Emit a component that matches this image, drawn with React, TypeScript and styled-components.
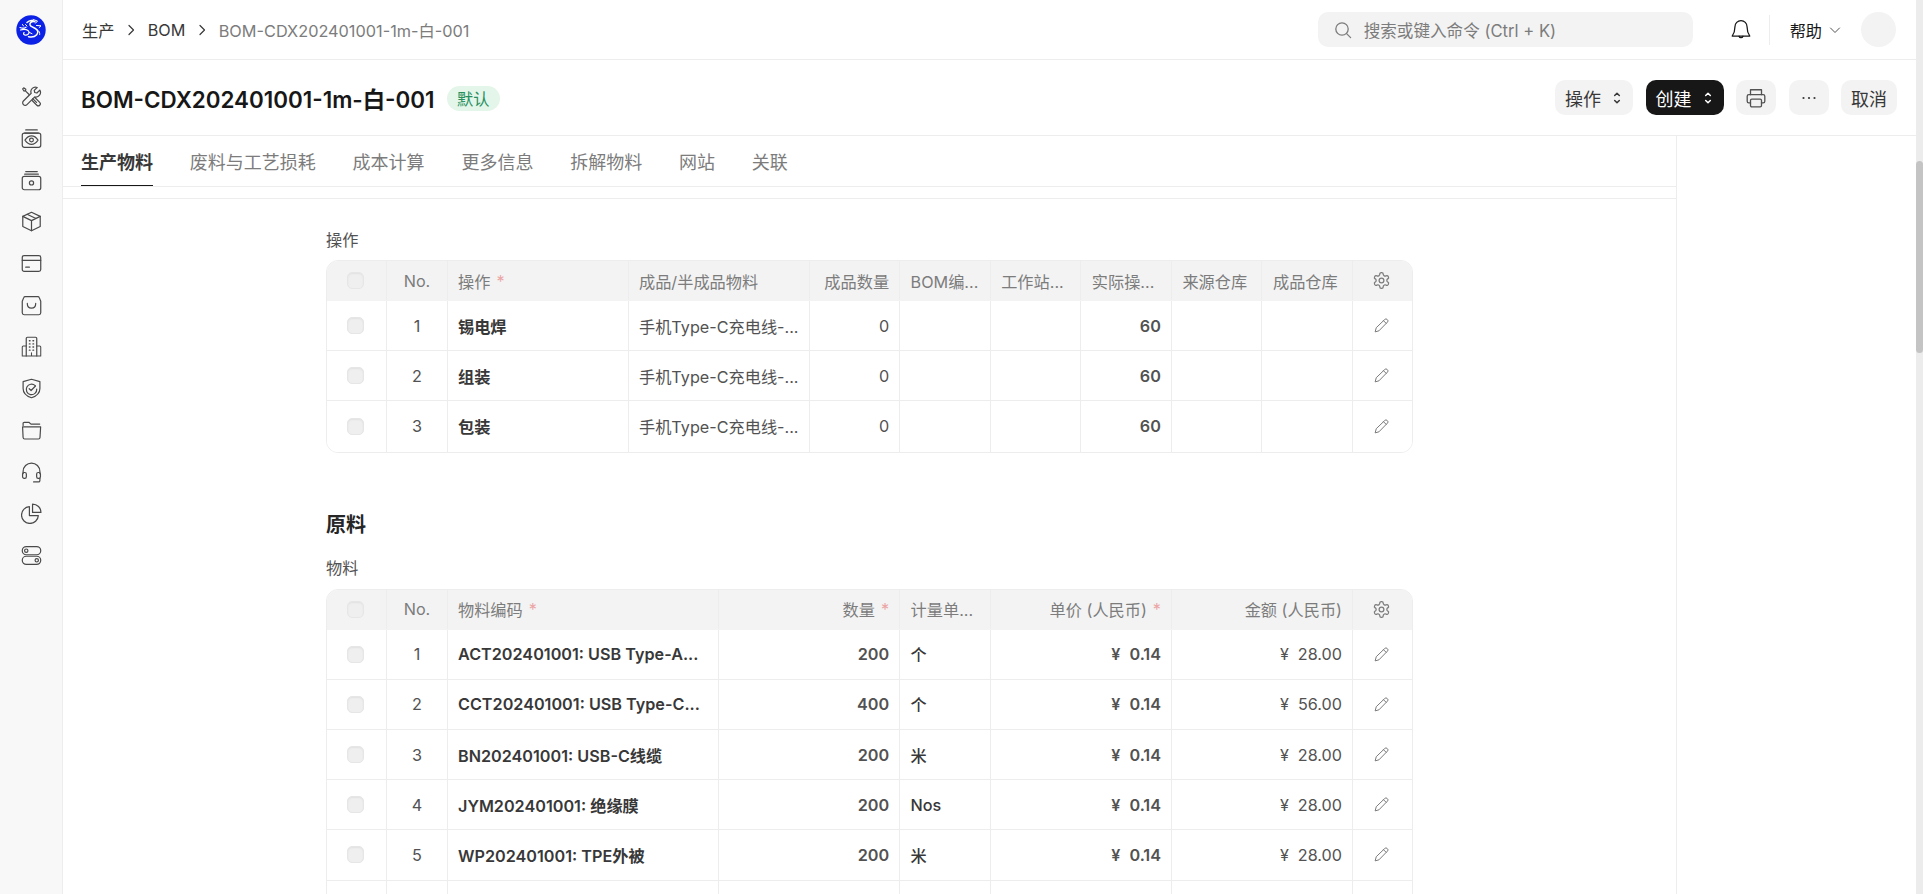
import React from "react";
import styled, { createGlobalStyle } from "styled-components";

const GlobalStyle = createGlobalStyle`
  html, body, #root {
    margin: 0;
    padding: 0;
    height: 100%;
    overflow: hidden;
    background: #fff;
  }
  body {
    font-family: Inter, "Noto Sans CJK SC", sans-serif;
    font-size: 16.2px;
    color: #171717;
  }
`;

const Page = styled.div`
  display: flex;
  height: 100vh;
  overflow: hidden;
`;

/* sidebar */
const Sidebar = styled.aside`
  flex: 0 0 63px;
  box-sizing: border-box;
  background: #f8f8f8;
  border-right: 1px solid #ededed;
`;

const LogoBox = styled.div`
  height: 60px;
  display: flex;
  align-items: center;
  justify-content: center;
`;

const NavList = styled.nav`
  margin-top: 16px;
`;

const NavItem = styled.div`
  height: 41.7px;
  display: flex;
  align-items: center;
  justify-content: center;
`;

const NavSvg = styled.svg.attrs({
  viewBox: "0 0 20 20",
  width: 21,
  height: 21,
  fill: "none",
  stroke: "#4a4a4a",
  strokeWidth: 1.15,
  strokeLinecap: "round",
  strokeLinejoin: "round",
})``;

/* main column */
const Main = styled.main`
  flex: 1;
  min-width: 0;
  display: flex;
  flex-direction: column;
`;

const TopBar = styled.header`
  flex: 0 0 60px;
  box-sizing: border-box;
  display: flex;
  align-items: center;
  padding: 0 20px 0 19px;
  border-bottom: 1px solid #ededed;
`;

const Crumbs = styled.div`
  display: flex;
  align-items: center;
  gap: 10.7px;
  color: #383838;
`;

const CrumbLast = styled.span`
  font-size: 16.3px;
  color: #7c7c7c;
`;

const Search = styled.div`
  margin-left: auto;
  width: 375px;
  height: 35px;
  box-sizing: border-box;
  display: flex;
  align-items: center;
  gap: 12px;
  padding-left: 16px;
  font-size: 16.6px;
  background: #f3f3f3;
  border-radius: 10px;
  color: #7c7c7c;
`;

const BellWrap = styled.div`
  margin-left: 37px;
  display: flex;
`;

const TopDivider = styled.div`
  width: 1px;
  height: 30px;
  margin: 0 20px 0 17px;
  background: #ededed;
`;

const Help = styled.div`
  display: flex;
  align-items: center;
  gap: 6.5px;
  color: #171717;
`;

const Avatar = styled.div`
  width: 35px;
  height: 35px;
  margin-left: 20.5px;
  border-radius: 50%;
  background: #f3f3f3;
`;

const PageHead = styled.div`
  flex: 0 0 76px;
  box-sizing: border-box;
  display: flex;
  align-items: center;
  padding: 0 19px 0 18px;
  border-bottom: 1px solid #ededed;
`;

const Title = styled.h1`
  margin: 0;
  font-size: 22.4px;
  font-weight: 600;
  color: #171717;
`;

const Badge = styled.span`
  margin: 1px 0 0 12px;
  height: 25px;
  padding: 0 10.5px;
  display: flex;
  align-items: center;
  border-radius: 13px;
  background: #e4f5e9;
  color: #278f5e;
`;

const Actions = styled.div`
  margin-left: auto;
  display: flex;
  gap: 12.5px;
`;

const Button = styled.button<{ $dark?: boolean; $square?: boolean }>`
  height: 35px;
  box-sizing: border-box;
  display: flex;
  align-items: center;
  justify-content: center;
  gap: 10px;
  padding: ${(p) => (p.$square ? "0" : "0 10px")};
  width: ${(p) => (p.$square ? "40px" : "auto")};
  border: 0;
  border-radius: 10px;
  font: inherit;
  font-size: 18px;
  background: ${(p) => (p.$dark ? "#171717" : "#f3f3f3")};
  color: ${(p) => (p.$dark ? "#fff" : "#383838")};
`;

const Content = styled.div`
  flex: 1;
  min-height: 0;
  display: flex;
  overflow: hidden;
`;

const FormColumn = styled.div`
  flex: 0 0 1614px;
  box-sizing: border-box;
  border-right: 1px solid #ededed;
`;

const Tabs = styled.div`
  height: 51px;
  box-sizing: border-box;
  display: flex;
  gap: 36.8px;
  padding-left: 18px;
  border-bottom: 1px solid #ededed;
`;

const Tab = styled.div<{ $active?: boolean }>`
  height: 50px;
  box-sizing: border-box;
  display: flex;
  align-items: center;
  font-size: 18px;
  font-weight: ${(p) => (p.$active ? 600 : 400)};
  color: ${(p) => (p.$active ? "#383838" : "#7c7c7c")};
  border-bottom: ${(p) => (p.$active ? "1.5px solid #171717" : "0")};
`;

const TabGap = styled.div`
  height: 11px;
  border-bottom: 1px solid #ededed;
`;

const Section = styled.section`
  width: 1087px;
  margin-left: 263px;
  padding-top: 30px;
`;

const FieldLabel = styled.div`
  line-height: 22px;
  margin-bottom: 9px;
  color: #525252;
`;

const SectionTitle = styled.h2`
  margin: 58px 0 18px;
  font-size: 20px;
  line-height: 28px;
  font-weight: 600;
  color: #262626;
  & + ${FieldLabel} {
    margin-bottom: 10px;
  }
`;

/* grid tables */
const Table = styled.div`
  box-sizing: border-box;
  border: 1px solid #ededed;
  border-radius: 12px;
  overflow: hidden;
`;

const Row = styled.div<{ $cols: string; $head?: boolean }>`
  box-sizing: border-box;
  display: grid;
  grid-template-columns: ${(p) => p.$cols};
  height: ${(p) => (p.$head ? "40px" : "50.2px")};
  background: ${(p) => (p.$head ? "#f3f3f3" : "#fff")};
  color: ${(p) => (p.$head ? "#7c7c7c" : "#525252")};
  border-bottom: 1px solid ${(p) => (p.$head ? "transparent" : "#ededed")};
  &:last-child {
    border-bottom: 0;
  }
`;

const Cell = styled.div<{ $align?: string; $weight?: number; $dark?: boolean }>`
  box-sizing: border-box;
  min-width: 0;
  display: flex;
  align-items: center;
  justify-content: ${(p) => p.$align || "flex-start"};
  padding: 0 10px 0 10.5px;
  white-space: nowrap;
  overflow: hidden;
  border-right: 1px solid #ededed;
  font-weight: ${(p) => p.$weight || 400};
  color: ${(p) => (p.$dark ? "#383838" : "inherit")};
  &:first-child,
  &:last-child {
    padding: 0 11px 0 9px;
  }
  &:last-child {
    border-right: 0;
  }
`;

const Check = styled.span`
  width: 17px;
  height: 17px;
  box-sizing: border-box;
  border-radius: 5px;
  background: #efefef;
  border: 1px solid #e6e6e6;
  box-shadow: inset 0 1px 2px rgba(0, 0, 0, 0.06);
`;

const Required = styled.span`
  margin-left: 6px;
  color: #eba5a5;
`;

const Yen = styled.span`
  margin-right: 9px;
`;

const Scrollbar = styled.div`
  flex: 0 0 7px;
  background: #ececec;
`;

const ScrollThumb = styled.div`
  height: 192px;
  margin-top: 161px;
  border-radius: 4px;
  background: #c4c4c4;
`;

/* icons */
const Logo = () => (
  <svg width="30" height="30" viewBox="0 0 30 30">
    <circle cx="15" cy="15" r="14.7" fill="#0b22e6" />
    <g fill="none" stroke="#fff" strokeLinecap="round" strokeLinejoin="round">
      <path strokeWidth="1.500" d="M11 7.500c2.500-2.500 6-2.600 8-.7-1.800-.4-3.500 0-4.500 1-1.200 1.300-.4 3 1.300 3.900l3.500 1.800c2.700 1.400 3.200 4.200 1.400 6.200-1.700 1.900-4.800 2.700-8.200 2" />
      <path strokeWidth="1.200" d="M4 12.500c2.300 1 4.500.7 6-.3M4.500 15c2.500-.8 5.500-.8 7.500.6 1.500 1.100 1.300 3-.2 4-1 .7-2.400.7-3.500.1-.9-.5-1-1.600-.2-2.100" />
      <path strokeWidth="1" d="M17 4.500l4.500 1.500-2 2.200M20.500 10.500l4.500.3-1.800 1.700M21.500 15c1.700 1 2.400 2.700 2.200 4.500M9.500 9.500l1.500 1.500M6.500 9.500l1 1.500M13.500 17.500l2.500 1.200" />
    </g>
  </svg>
);

const ToolsIcon = () => (
  <NavSvg>
    <path d="M17.900 3.900l-2.800 2.800-2-.5-.5-2 2.800-2.800a4.300 4.300 0 0 0-5.700 5.500L2.300 14.300a2.400 2.400 0 0 0 3.400 3.400l7.400-7.400a4.300 4.300 0 0 0 4.800-6.400z" />
    <path d="M7.700 8.100L4.200 4.600l.4-1.600-2-1.200-1 1 1.200 2 1.600-.4M11.200 12l3.600 3.600M13.200 11l4.600 4.600a1.900 1.900 0 0 1-2.700 2.700l-4.500-4.500" />
  </NavSvg>
);

const EyeBoxIcon = () => (
  <NavSvg>
    <path d="M4.500 1.800h11M3.500 4.800h13" />
    <rect x="1.200" y="4.800" width="17.600" height="13.600" rx="2" />
    <path d="M3.800 11.500c2-3 4-4 6.200-4s4.200 1 6.200 4c-2 3-4 4-6.200 4s-4.200-1-6.200-4z" />
    <circle cx="10" cy="11.500" r="1.800" />
  </NavSvg>
);

const BoxDotIcon = () => (
  <NavSvg>
    <path d="M4.500 1.500h11M3.500 4h13" />
    <rect x="1.200" y="6" width="17.600" height="12.800" rx="2" />
    <circle cx="10" cy="12.300" r="2" />
  </NavSvg>
);

const PackageIcon = () => (
  <NavSvg>
    <path d="M10 1.200l8.300 3.900v9.700L10 18.800l-8.300-4V5.100z" />
    <path d="M1.700 5.100L10 9.200l8.300-4.100M10 9.200v9.600M5.800 3.100l8.400 4.100" />
  </NavSvg>
);

const CardIcon = () => (
  <NavSvg>
    <rect x="1.200" y="2.500" width="17.600" height="15" rx="1.800" />
    <path d="M1.200 7h17.600M4.500 13.500h3.500" />
  </NavSvg>
);

const BagIcon = () => (
  <NavSvg>
    <path d="M4 1.500h12a1.500 1.500 0 0 1 1.400 1l1.400 3.500v11a1.800 1.800 0 0 1-1.800 1.800H3a1.800 1.800 0 0 1-1.800-1.800V6l1.400-3.500a1.500 1.500 0 0 1 1.400-1z" />
    <path d="M6 8c0 3 1.500 4.500 4 4.500S14 11 14 8" />
  </NavSvg>
);

const BuildingIcon = () => (
  <NavSvg>
    <path d="M5 19V2.500A1.200 1.200 0 0 1 6.200 1.200h7.600A1.200 1.200 0 0 1 15 2.500V19" />
    <path d="M5 9.500H2.200a1 1 0 0 0-1 1V19h17.600v-8.500a1 1 0 0 0-1-1H15M10 19v-3" strokeWidth="1" />
    <path d="M8 4.500h.6M11.400 4.500h.6M8 7.500h.6M11.400 7.500h.6M8 10.500h.6M11.400 10.500h.6M8 13.500h.6M11.400 13.500h.6" strokeWidth="1.300" />
  </NavSvg>
);

const ShieldIcon = () => (
  <NavSvg>
    <path d="M10 1.200l8 2.300v6.500c0 4.300-3.300 7.300-8 8.800-4.700-1.500-8-4.500-8-8.800V3.500z" />
    <path d="M13.500 7.300A5 5 0 1 0 15 10.500" />
    <path d="M7.800 10.200l1.800 1.700 4.200-4.300" />
  </NavSvg>
);

const FolderIcon = () => (
  <NavSvg>
    <path d="M2 5.200V3.200a1 1 0 0 1 1-1h4.500l2 1.700h8.300" />
    <path d="M1.500 6.500h17.200l-.6 10.200a1.500 1.500 0 0 1-1.500 1.400H3.500A1.500 1.500 0 0 1 2 16.700z" />
  </NavSvg>
);

const HeadsetIcon = () => (
  <NavSvg>
    <path d="M2 11V9a8 8 0 0 1 16 0v2" />
    <rect x="1.500" y="10" width="3.600" height="5.500" rx="1.500" />
    <rect x="14.900" y="10" width="3.600" height="5.500" rx="1.500" />
    <path d="M18 15.500v2a1.500 1.500 0 0 1-1.500 1.500H12" />
  </NavSvg>
);

const PieIcon = () => (
  <NavSvg>
    <path d="M8 3.500a8 8 0 1 0 8.500 8.500H8z" />
    <path d="M11 1a8 8 0 0 1 8 8h-8z" />
  </NavSvg>
);

const TogglesIcon = () => (
  <NavSvg>
    <rect x="1.200" y="1.500" width="17.600" height="7.800" rx="3.900" />
    <circle cx="5" cy="5.400" r="1.600" />
    <rect x="1.200" y="10.700" width="17.600" height="7.800" rx="3.900" />
    <circle cx="15" cy="14.600" r="1.600" />
  </NavSvg>
);

const navIcons = [
  ToolsIcon,
  EyeBoxIcon,
  BoxDotIcon,
  PackageIcon,
  CardIcon,
  BagIcon,
  BuildingIcon,
  ShieldIcon,
  FolderIcon,
  HeadsetIcon,
  PieIcon,
  TogglesIcon,
];

const ChevronRight = () => (
  <svg width="12" height="12" viewBox="0 0 12 12" fill="none" stroke="#383838" strokeWidth="1.200" strokeLinecap="round" strokeLinejoin="round">
    <path d="M4 1.500L8.500 6 4 10.500" />
  </svg>
);

const ChevronDown = () => (
  <svg width="12" height="12" viewBox="0 0 12 12" fill="none" stroke="#525252" strokeWidth="1" strokeLinecap="round" strokeLinejoin="round">
    <path d="M1.500 4l4.500 4.500L10.500 4" />
  </svg>
);

const SearchIcon = () => (
  <svg width="18" height="18" viewBox="0 0 18 18" fill="none" stroke="#7c7c7c" strokeWidth="1.300" strokeLinecap="round">
    <circle cx="8" cy="8" r="6.200" />
    <path d="M12.600 12.600l4 4" />
  </svg>
);

const BellIcon = () => (
  <svg width="22" height="22" viewBox="0 0 20 20" fill="none" stroke="#171717" strokeWidth="1.150" strokeLinecap="round" strokeLinejoin="round">
    <path d="M10 1.500a5.500 5.500 0 0 0-5.500 5.500c0 5-1.800 7.500-2.500 8.500h16c-.7-1-2.500-3.500-2.500-8.500A5.500 5.500 0 0 0 10 1.500z" />
    <path d="M8.200 15.700a1.900 1.900 0 0 0 3.600 0" />
  </svg>
);

const UpDownIcon = ({ color }: { color: string }) => (
  <svg width="12" height="14" viewBox="0 0 12 14" fill="none" stroke={color} strokeWidth="1.500" strokeLinecap="round" strokeLinejoin="round">
    <path d="M3.700 4.500L6 2.200l2.300 2.300M3.700 9.500L6 11.800l2.300-2.300" />
  </svg>
);

const PrinterIcon = () => (
  <svg width="22" height="22" viewBox="0 0 20 20" fill="none" stroke="#525252" strokeWidth="1.200" strokeLinecap="round" strokeLinejoin="round">
    <path d="M5 7V2.500h10V7" />
    <path d="M5 14.500H3.500a1.500 1.500 0 0 1-1.500-1.500V8.500A1.500 1.500 0 0 1 3.500 7h13A1.500 1.500 0 0 1 18 8.500V13a1.500 1.500 0 0 1-1.500 1.500H15" />
    <rect x="5" y="11" width="10" height="7" rx="1.200" />
  </svg>
);

const MoreIcon = () => (
  <svg width="16" height="16" viewBox="0 0 16 16" fill="#383838">
    <circle cx="2.500" cy="8" r="1.100" />
    <circle cx="8" cy="8" r="1.100" />
    <circle cx="13.500" cy="8" r="1.100" />
  </svg>
);

const GearIcon = () => (
  <svg width="19" height="19" viewBox="0 0 24 24" fill="none" stroke="#7c7c7c" strokeWidth="1.600" strokeLinecap="round" strokeLinejoin="round">
    <path d="M12.200 2h-.4a2 2 0 0 0-2 2v.200a2 2 0 0 1-1 1.700l-.4.300a2 2 0 0 1-2 0l-.200-.100a2 2 0 0 0-2.700.700l-.200.400a2 2 0 0 0 .7 2.700l.2.100a2 2 0 0 1 1 1.700v.500a2 2 0 0 1-1 1.700l-.2.100a2 2 0 0 0-.7 2.700l.2.400a2 2 0 0 0 2.700.7l.2-.100a2 2 0 0 1 2 0l.4.300a2 2 0 0 1 1 1.700v.200a2 2 0 0 0 2 2h.4a2 2 0 0 0 2-2v-.200a2 2 0 0 1 1-1.700l.4-.300a2 2 0 0 1 2 0l.2.100a2 2 0 0 0 2.700-.700l.2-.400a2 2 0 0 0-.7-2.700l-.2-.100a2 2 0 0 1-1-1.700v-.500a2 2 0 0 1 1-1.700l.2-.100a2 2 0 0 0 .7-2.700l-.2-.400a2 2 0 0 0-2.700-.7l-.2.100a2 2 0 0 1-2 0l-.4-.300a2 2 0 0 1-1-1.700V4a2 2 0 0 0-2-2z" />
    <circle cx="12" cy="12" r="3" />
  </svg>
);

const PencilIcon = () => (
  <svg width="17" height="17" viewBox="0 0 16 16" fill="none" stroke="#757575" strokeWidth="0.900" strokeLinejoin="round" strokeLinecap="round">
    <path d="M11.200 2.200a1.400 1.400 0 0 1 2 0l.5.500a1.400 1.400 0 0 1 0 2L5.600 13 2 14l1-3.600z" />
    <path d="M9.900 3.500l2.500 2.500" />
  </svg>
);

/* table data */
const opCols = "60px 60.5px 181px 181px repeat(6, 90.6px) 1fr";
const matCols = "60px 60.5px 271.6px 181px 90.9px 181px 181px 1fr";

const operations = ["锡电焊", "组装", "包装"];

const materials = [
  { code: "ACT202401001: USB Type-A...", qty: "200", uom: "个", amount: "28.00" },
  { code: "CCT202401001: USB Type-C...", qty: "400", uom: "个", amount: "56.00" },
  { code: "BN202401001: USB-C线缆", qty: "200", uom: "米", amount: "28.00" },
  { code: "JYM202401001: 绝缘膜", qty: "200", uom: "Nos", amount: "28.00" },
  { code: "WP202401001: TPE外被", qty: "200", uom: "米", amount: "28.00" },
];

const tabs = ["生产物料", "废料与工艺损耗", "成本计算", "更多信息", "拆解物料", "网站", "关联"];

const opHeads = ["BOM编...", "工作站...", "实际操...", "来源仓库", "成品仓库"];

export default function App() {
  return (
    <Page>
      <GlobalStyle />
      <Sidebar>
        <LogoBox>
          <Logo />
        </LogoBox>
        <NavList>
          {navIcons.map((Icon, i) => (
            <NavItem key={i}>
              <Icon />
            </NavItem>
          ))}
        </NavList>
      </Sidebar>

      <Main>
        <TopBar>
          <Crumbs>
            <span>生产</span>
            <ChevronRight />
            <span>BOM</span>
            <ChevronRight />
            <CrumbLast>BOM-CDX202401001-1m-白-001</CrumbLast>
          </Crumbs>
          <Search>
            <SearchIcon />
            <span>搜索或键入命令 (Ctrl + K)</span>
          </Search>
          <BellWrap>
            <BellIcon />
          </BellWrap>
          <TopDivider />
          <Help>
            帮助
            <ChevronDown />
          </Help>
          <Avatar />
        </TopBar>

        <PageHead>
          <Title>BOM-CDX202401001-1m-白-001</Title>
          <Badge>默认</Badge>
          <Actions>
            <Button>
              操作
              <UpDownIcon color="#383838" />
            </Button>
            <Button $dark>
              创建
              <UpDownIcon color="#ffffff" />
            </Button>
            <Button $square>
              <PrinterIcon />
            </Button>
            <Button $square>
              <MoreIcon />
            </Button>
            <Button>取消</Button>
          </Actions>
        </PageHead>

        <Content>
          <FormColumn>
            <Tabs>
              {tabs.map((t, i) => (
                <Tab key={t} $active={i === 0}>
                  {t}
                </Tab>
              ))}
            </Tabs>
            <TabGap />
            <Section>
              <FieldLabel>操作</FieldLabel>
              <Table>
                <Row $cols={opCols} $head>
                  <Cell $align="center">
                    <Check />
                  </Cell>
                  <Cell $align="center">No.</Cell>
                  <Cell>
                    操作<Required>*</Required>
                  </Cell>
                  <Cell>成品/半成品物料</Cell>
                  <Cell $align="flex-end">成品数量</Cell>
                  {opHeads.map((h) => (
                    <Cell key={h}>{h}</Cell>
                  ))}
                  <Cell $align="center">
                    <GearIcon />
                  </Cell>
                </Row>
                {operations.map((op, i) => (
                  <Row $cols={opCols} key={op}>
                    <Cell $align="center">
                      <Check />
                    </Cell>
                    <Cell $align="center">{i + 1}</Cell>
                    <Cell $weight={600} $dark>
                      {op}
                    </Cell>
                    <Cell>手机Type-C充电线-...</Cell>
                    <Cell $align="flex-end">0</Cell>
                    <Cell />
                    <Cell />
                    <Cell $align="flex-end" $weight={600}>
                      60
                    </Cell>
                    <Cell />
                    <Cell />
                    <Cell $align="center">
                      <PencilIcon />
                    </Cell>
                  </Row>
                ))}
              </Table>

              <SectionTitle>原料</SectionTitle>
              <FieldLabel>物料</FieldLabel>
              <Table>
                <Row $cols={matCols} $head>
                  <Cell $align="center">
                    <Check />
                  </Cell>
                  <Cell $align="center">No.</Cell>
                  <Cell>
                    物料编码<Required>*</Required>
                  </Cell>
                  <Cell $align="flex-end">
                    数量<Required>*</Required>
                  </Cell>
                  <Cell>计量单...</Cell>
                  <Cell $align="flex-end">
                    单价 (人民币)<Required>*</Required>
                  </Cell>
                  <Cell $align="flex-end">金额 (人民币)</Cell>
                  <Cell $align="center">
                    <GearIcon />
                  </Cell>
                </Row>
                {materials.map((m, i) => (
                  <Row $cols={matCols} key={m.code}>
                    <Cell $align="center">
                      <Check />
                    </Cell>
                    <Cell $align="center">{i + 1}</Cell>
                    <Cell $weight={600} $dark>
                      {m.code}
                    </Cell>
                    <Cell $align="flex-end" $weight={600}>
                      {m.qty}
                    </Cell>
                    <Cell $weight={500} $dark>
                      {m.uom}
                    </Cell>
                    <Cell $align="flex-end" $weight={600}>
                      <Yen>¥</Yen>0.14
                    </Cell>
                    <Cell $align="flex-end">
                      <Yen>¥</Yen>
                      {m.amount}
                    </Cell>
                    <Cell $align="center">
                      <PencilIcon />
                    </Cell>
                  </Row>
                ))}
                <Row $cols={matCols}>
                  <Cell />
                  <Cell />
                  <Cell />
                  <Cell />
                  <Cell />
                  <Cell />
                  <Cell />
                  <Cell />
                </Row>
              </Table>
            </Section>
          </FormColumn>
        </Content>
      </Main>

      <Scrollbar>
        <ScrollThumb />
      </Scrollbar>
    </Page>
  );
}
